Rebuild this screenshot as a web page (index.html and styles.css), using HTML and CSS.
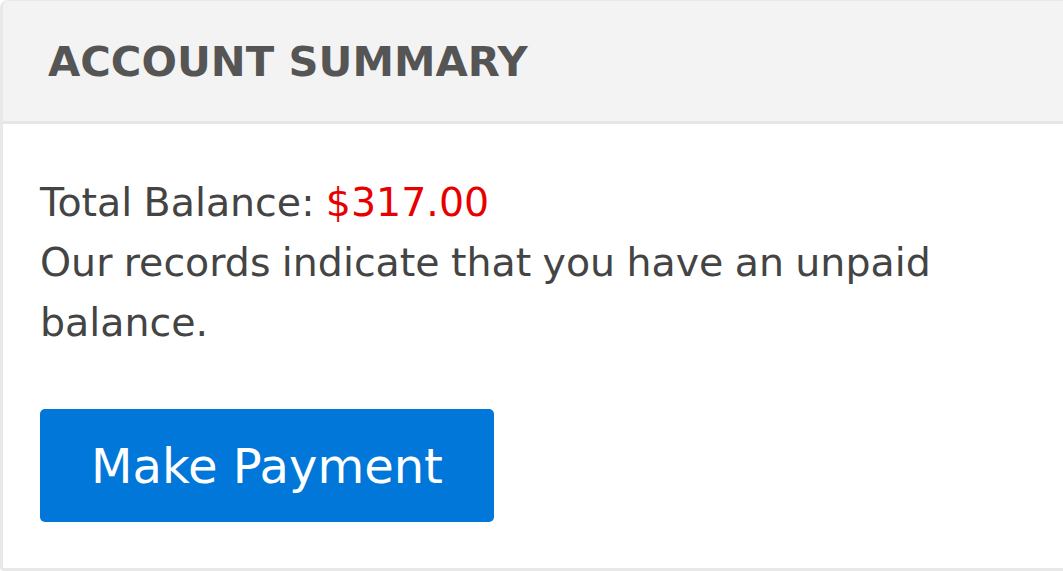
FILE: index.html
```html
<!DOCTYPE html>
<html>
<head>
<meta charset="utf-8">
<link rel="stylesheet" href="styles.css">
</head>
<body>
<div class="card">
  <div class="card-header">
    <h2 class="title">ACCOUNT SUMMARY</h2>
  </div>
  <div class="card-body">
    <p class="text">Total Balance: <span class="amount">$317.00</span><br>Our records indicate that you have an unpaid balance.</p>
    <a class="btn" href="#">Make Payment</a>
  </div>
</div>
</body>
</html>
```
FILE: styles.css
```css
html, body {
  margin: 0;
  padding: 0;
  background: #ffffff;
}
body {
  font-family: "DejaVu Sans", Verdana, sans-serif;
}
.card {
  width: 100%;
  border: 3px solid #e8e8e8;
  border-top-width: 1px;
  border-right: none;
  border-top-left-radius: 8px;
  border-bottom-left-radius: 4px;
  box-sizing: border-box;
}
.card-header {
  background: #f3f3f3;
  height: 120px;
  border-bottom: 3px solid #e6e6e6;
  display: flex;
  align-items: center;
  padding-left: 45px;
  border-top-left-radius: 6px;
}
.title {
  margin: 0;
  font-size: 41.7px;
  font-weight: bold;
  color: #555555;
}
.card-body {
  padding: 48px 0 46px 37px;
}
.text {
  margin: 0;
  font-size: 39.5px;
  line-height: 60px;
  color: #444444;
  width: 960px;
  word-spacing: -1.2px;
}
.amount {
  color: #e80000;
}
.btn {
  display: inline-flex;
  align-items: center;
  justify-content: center;
  margin-top: 57px;
  width: 454px;
  height: 113px;
  background: #0077d9;
  border-radius: 5px;
  color: #ffffff;
  text-decoration: none;
  font-size: 48px;
}
```
